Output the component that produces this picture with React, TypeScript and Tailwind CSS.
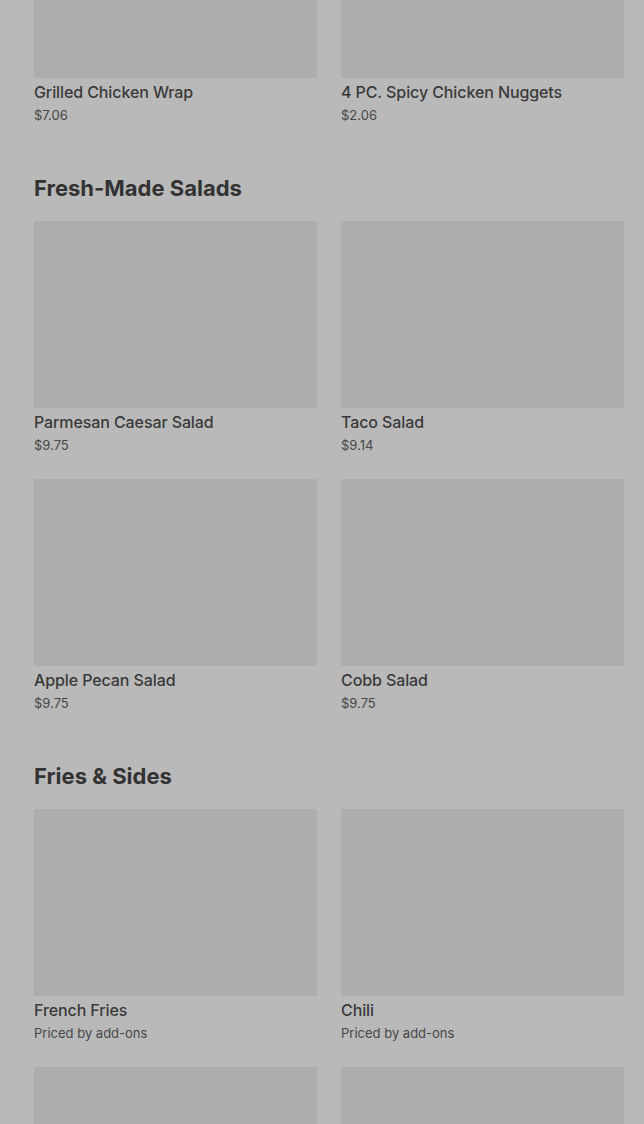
import React from "react";

type Item = { name?: string; price?: string };

const sections: { title?: string; items: Item[] }[] = [
  {
    items: [
      { name: "Grilled Chicken Wrap", price: "$7.06" },
      { name: "4 PC. Spicy Chicken Nuggets", price: "$2.06" },
    ],
  },
  {
    title: "Fresh-Made Salads",
    items: [
      { name: "Parmesan Caesar Salad", price: "$9.75" },
      { name: "Taco Salad", price: "$9.14" },
      { name: "Apple Pecan Salad", price: "$9.75" },
      { name: "Cobb Salad", price: "$9.75" },
    ],
  },
  {
    title: "Fries & Sides",
    items: [
      { name: "French Fries", price: "Priced by add-ons" },
      { name: "Chili", price: "Priced by add-ons" },
      {},
      {},
    ],
  },
];

function Card({ item }: { item: Item }) {
  return (
    <div className="flex flex-col">
      <div className="h-[187px] w-full bg-[#adadad]" />
      {item.name && (
        <>
          <div className="mt-[4px] text-[16px] leading-5 font-medium tracking-[-0.1px] text-[#3a3a3a]">
            {item.name}
          </div>
          <div className="mt-[3px] text-[13px] leading-5 text-[#474747]">{item.price}</div>
        </>
      )}
    </div>
  );
}

export default function App() {
  return (
    <div
      className="h-[1124px] w-full overflow-hidden bg-[#b9b9b9]"
      style={{ fontFamily: "Inter, 'Noto Sans', sans-serif" }}
    >
      <div className="-mt-[109px] pl-[34px] pr-[20px]">
        {sections.map((s, i) => (
          <section key={i}>
            {s.title && (
              <h2 className="mt-[47px] mb-[17px] text-[22px] leading-8 font-bold text-[#333333]">
                {s.title}
              </h2>
            )}
            <div className="grid grid-cols-2 gap-x-6 gap-y-6">
              {s.items.map((it, j) => (
                <Card key={j} item={it} />
              ))}
            </div>
          </section>
        ))}
      </div>
    </div>
  );
}
